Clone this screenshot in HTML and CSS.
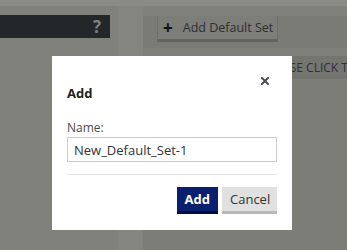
FILE: index.html
```html
<!DOCTYPE html>
<html lang="en">
<head>
    <meta charset="UTF-8">
    <title>Default Sets</title>
    <link rel="stylesheet" href="styles.css">
</head>
<body>

<div class="page">
    <div class="topbar"></div>
    <div class="main">
        <div class="left">
            <div class="left-head">
                <span class="help">?</span>
            </div>
        </div>
        <div class="gutter"></div>
        <div class="panel">
            <div class="toolbar">
                <button class="btn-set"><span class="plus">+</span>Add Default Set</button>
            </div>
            <div class="notice">Please click the button above</div>
        </div>
    </div>
</div>

<div class="overlay">
    <div class="modal">
        <div class="modal-header">
            <h2 class="modal-title">Add</h2>
            <svg class="close" width="8" height="8" viewBox="0 0 8 8">
                <path d="M1 1 L7 7 M7 1 L1 7" stroke="#4a4e55" stroke-width="2" stroke-linecap="square"/>
            </svg>
        </div>
        <div class="modal-body">
            <label class="field-label">Name:</label>
            <input class="field-input" type="text" value="New_Default_Set-1">
        </div>
        <div class="modal-footer">
            <button class="btn btn-primary">Add</button>
            <button class="btn btn-cancel">Cancel</button>
        </div>
    </div>
</div>

</body>
</html>
```

FILE: styles.css
```css
html, body, div, span, h2, label, button, input {
    margin: 0;
    padding: 0;
    border: 0;
    font: inherit;
}

body {
    font-family: "Open Sans", "Liberation Sans", sans-serif;
    font-size: 13px;
    background: #ebebe1;
    height: 250px;
    overflow: hidden;
}

.page {
    height: 250px;
}

.topbar {
    height: 6px;
    background: #fbfbf4;
}

.main {
    display: flex;
    height: 244px;
}

.left {
    width: 118px;
    flex-shrink: 0;
}

.left-head {
    margin-top: 9px;
    width: 110px;
    height: 23px;
    background: #40474e;
    display: flex;
    justify-content: flex-end;
    align-items: center;
}

.left-head .help {
    color: #dfe8f2;
    font-weight: 700;
    font-size: 17px;
    line-height: 23px;
    margin-right: 9px;
}

.gutter {
    width: 25px;
    flex-shrink: 0;
    background: #f2f2e9;
}

.panel {
    flex: 1;
    min-width: 0;
    overflow: hidden;
    margin-top: 10px;
    background: #e3e3da;
}

.toolbar {
    height: 33px;
    background: #e0e0d7;
    padding-left: 14px;
    border-bottom: 8px solid #e9e9e0;
}

.btn-set {
    display: flex;
    align-items: center;
    margin-top: -1px;
    width: 121px;
    height: 27px;
    box-sizing: border-box;
    background: #e3e3dc;
    border: 1px solid #c8c8c0;
    border-bottom: 3px solid #b6b6ae;
    color: #585858;
    font-size: 12.5px;
    padding-left: 5px;
}

.btn-set .plus {
    font-weight: 700;
    font-size: 17px;
    color: #222;
    margin-right: 10px;
    line-height: 1;
}

.notice {
    height: 23px;
    line-height: 23px;
    background: #d5d5ca;
    padding-left: 119px;
    text-transform: uppercase;
    font-size: 12px;
    color: #56567a;
    white-space: nowrap;
}

.overlay {
    position: fixed;
    left: 0;
    top: 0;
    right: 0;
    bottom: 0;
    background: rgba(0, 0, 0, 0.45);
    padding: 56px 0 0 52px;
}

.modal {
    width: 240px;
    box-sizing: border-box;
    background: #fff;
    padding: 21px 15px 16px;
}

.modal-header {
    display: flex;
    justify-content: space-between;
    align-items: flex-start;
}

.modal-title {
    margin-top: 7px;
    font-size: 13px;
    font-weight: 700;
    line-height: 18px;
    color: #222;
}

.close {
    margin-right: 8px;
}

.modal-body {
    padding-top: 18px;
}

.field-label {
    display: block;
    font-size: 12px;
    line-height: 16px;
    color: #4a4a4a;
    margin-bottom: 1px;
}

.field-input {
    display: block;
    width: 100%;
    height: 25px;
    box-sizing: border-box;
    border: 1px solid #ccc;
    padding: 0 6px;
    font-size: 13px;
    color: #333;
}

.modal-footer {
    margin-top: 12px;
    border-top: 1px solid #e5e5e5;
    padding-top: 12px;
    display: flex;
    justify-content: flex-end;
    gap: 4px;
}

.btn {
    height: 27px;
    box-sizing: border-box;
    padding: 0 8px;
    font-size: 13px;
    line-height: 24px;
}

.btn-primary {
    background: #0b1f6f;
    border-bottom: 3px solid #000f3a;
    color: #fff;
    font-weight: 700;
}

.btn-cancel {
    background: #e0e0e0;
    border-bottom: 3px solid #b8b8b8;
    color: #333;
    width: 55px;
}
```
